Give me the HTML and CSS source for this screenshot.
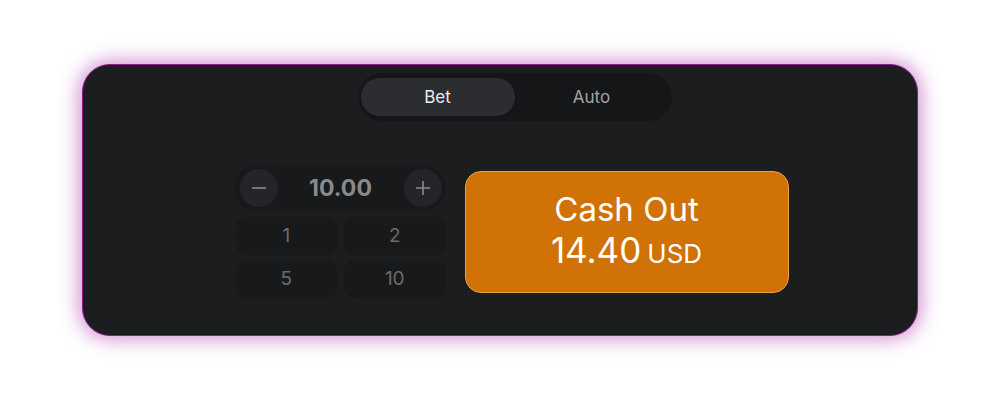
FILE: index.html
```html
<!DOCTYPE html>
<html lang="en">
<head>
    <meta charset="UTF-8">
    <meta name="viewport" content="width=device-width, initial-scale=1.0">
    <title>Bet Panel</title>
    <link rel="stylesheet" href="styles.css">
</head>
<body>
    <div class="panel">
        <div class="tabs">
            <div class="tab active">Bet</div>
            <div class="tab">Auto</div>
        </div>

        <div class="play">
            <div class="amount">
                <div class="stepper">
                    <div class="step">
                        <svg width="16" height="16" viewBox="0 0 16 16"><path d="M1 8h14" stroke="#8a8a8a" stroke-width="1.6" fill="none"/></svg>
                    </div>
                    <div class="value">10.00</div>
                    <div class="step">
                        <svg width="16" height="16" viewBox="0 0 16 16"><path d="M1 8h14M8 1v14" stroke="#8a8a8a" stroke-width="1.6" fill="none"/></svg>
                    </div>
                </div>
                <div class="quick">
                    <div class="chip">1</div>
                    <div class="chip">2</div>
                    <div class="chip">5</div>
                    <div class="chip">10</div>
                </div>
            </div>

            <div class="cashout">
                <div class="cashout-label">Cash Out</div>
                <div class="cashout-sum">14.40<span class="currency">USD</span></div>
            </div>
        </div>
    </div>
</body>
</html>
```

FILE: styles.css
```css
body {
    margin: 0;
    height: 400px;
    display: flex;
    align-items: center;
    justify-content: center;
    background-color: #fff;
    font-family: Inter, "Noto Sans", sans-serif;
}
.panel {
    box-sizing: border-box;
    width: 836px;
    height: 272px;
    margin-right: 1px;
    padding: 8px 0 0 23px;
    background: #1c1d1f;
    border: 1px solid #8d1a8d;
    border-radius: 28px;
    box-shadow: 0 0 18px 4px rgba(172, 52, 172, 0.5);
    display: flex;
    flex-direction: column;
    align-items: center;
}
.tabs {
    display: flex;
    width: 314px;
    box-sizing: border-box;
    padding: 5px 3px;
    margin-left: 7px;
    background: #151618;
    border-radius: 24px;
}
.tab {
    flex: 1;
    height: 38px;
    line-height: 38px;
    text-align: center;
    font-size: 17px;
    color: #a3a3a3;
    border-radius: 19px;
}
.tab.active {
    background: #2c2d30;
    color: #ececec;
}
.play {
    display: flex;
    align-items: center;
    gap: 19px;
    margin-top: 44px;
}
.amount {
    width: 212px;
    display: flex;
    flex-direction: column;
    gap: 6px;
}
.stepper {
    display: flex;
    align-items: center;
    justify-content: space-between;
    height: 46px;
    padding: 0 4px 0 6px;
    background: #18191b;
    border-radius: 23px;
}
.step {
    width: 38px;
    height: 38px;
    border-radius: 50%;
    background: #242528;
    display: flex;
    align-items: center;
    justify-content: center;
}
.value {
    font-size: 23px;
    font-weight: 700;
    color: #8a8a8a;
}
.quick {
    display: grid;
    grid-template-columns: 1fr 1fr;
    gap: 5px 7px;
    padding-left: 2px;
}
.chip {
    height: 38px;
    line-height: 38px;
    text-align: center;
    font-size: 19px;
    color: #6c6c6c;
    background: #18191b;
    border-radius: 10px;
}
.cashout {
    box-sizing: border-box;
    width: 324px;
    height: 122px;
    background: #d07205;
    border: 1px solid #e9a14a;
    border-radius: 16px;
    display: flex;
    flex-direction: column;
    align-items: center;
    justify-content: center;
    color: #fff;
}
.cashout-label {
    font-size: 33px;
    line-height: 40px;
}
.cashout-sum {
    font-size: 35px;
    line-height: 42px;
}
.currency {
    font-size: 26px;
    margin-left: 6px;
}
```
